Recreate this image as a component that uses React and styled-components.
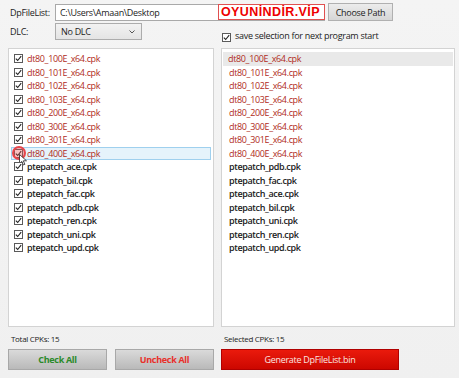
import React from "react";
import styled, { createGlobalStyle } from "styled-components";

const Global = createGlobalStyle`
  html, body { margin: 0; padding: 0; background: #f0f0f0; }
  body { font-family: "Open Sans", "Noto Sans", sans-serif; }
`;

const Window = styled.div`
  width: 459px;
  height: 378px;
  box-sizing: border-box;
  padding: 3px 4px 0 8px;
  background: linear-gradient(#f4f4f4, #f0f0f0);
  display: flex;
  flex-direction: column;
  font-size: 9px;
  letter-spacing: -0.3px;
  color: #1e1e1e;
`;

const TopRow = styled.div`
  display: flex;
  align-items: center;
  height: 18px;
`;

const Label = styled.span`
  width: 45px;
  padding-left: 2px;
  font-size: 9px;
  color: #222;
`;

const PathField = styled.div`
  position: relative;
  width: 270px;
  height: 17px;
  box-sizing: border-box;
  border: 1px solid #a9a9a9;
  background: #fff;
  padding: 0 4px;
  display: flex;
  align-items: center;
  font-size: 9px;
  color: #222;
`;

const Watermark = styled.span`
  position: absolute;
  right: -1px;
  top: -1px;
  width: 107px;
  height: 16px;
  box-sizing: border-box;
  border: 1px solid #e05050;
  background: #fff;
  color: #ee0000;
  font-family: "Liberation Sans", Arial, sans-serif;
  font-weight: 700;
  font-size: 12.5px;
  letter-spacing: 0.4px;
  display: flex;
  align-items: center;
  padding-left: 2px;
`;

const GrayButton = styled.button`
  margin-left: 3px;
  height: 18px;
  width: 65px;
  padding: 0;
  border: 1px solid #b0b0b0;
  background: linear-gradient(#ececec, #d6d6d6);
  font-family: inherit;
  letter-spacing: inherit;
  font-size: 9px;
  color: #222;
`;

const Grid = styled.div`
  display: grid;
  grid-template-columns: 206px 234px;
  column-gap: 7px;
  grid-template-rows: 27px 279px 22px 21px;
`;

const DlcCell = styled.div`
  display: flex;
  align-items: center;
  padding-bottom: 6px;
`;

const Select = styled.div`
  width: 87px;
  height: 17px;
  box-sizing: border-box;
  border: 1px solid #acacac;
  background: linear-gradient(#f2f2f2, #e4e4e4);
  display: flex;
  align-items: center;
  justify-content: space-between;
  padding: 0 6px 0 5px;
  font-size: 9px;
  color: #222;
`;

const SaveCell = styled.div`
  display: flex;
  align-items: flex-end;
  gap: 4px;
  padding: 0 0 6px 1px;
  font-size: 9px;
  color: #222;
`;

const ListBox = styled.div`
  box-sizing: border-box;
  border: 1px solid #d3d3d3;
  background: #fff;
  padding: 3px 2px 0 2px;
  display: flex;
  flex-direction: column;
`;

const Row = styled.div`
  position: relative;
  height: 13.5px;
  box-sizing: border-box;
  display: flex;
  align-items: center;
  gap: 4px;
  padding-left: ${(p) => (p.$plain ? "4px" : "2px")};
  color: ${(p) => (p.$red ? "#b02c22" : "#1a1a1a")};
  font-weight: ${(p) => (p.$red ? 400 : 600)};
  font-size: 9px;
  letter-spacing: -0.36px;
  background: ${(p) => (p.$hover ? "#e5f3fb" : p.$sel ? "#e9e9e9" : "transparent")};
  border: 1px solid ${(p) => (p.$hover ? "#9fd0ee" : "transparent")};
  margin: 0 ${(p) => (p.$sel ? "-1px" : "0")};
`;

const Box = styled.span`
  width: 9px;
  height: 9px;
  box-sizing: border-box;
  border: 1px solid #5a5a5a;
  background: #fff;
  display: inline-flex;
  align-items: center;
  justify-content: center;
  flex: none;
`;

const Ring = styled.span`
  position: absolute;
  left: 0px;
  top: -2px;
  width: 14px;
  height: 14px;
  box-sizing: border-box;
  border-radius: 50%;
  border: 2px solid #e8454a;
  background: rgba(235, 80, 80, 0.35);
`;

const Cursor = styled.svg`
  position: absolute;
  left: 7px;
  top: 6px;
`;

const Count = styled.div`
  display: flex;
  align-items: center;
  padding-left: 3px;
  font-size: 8px;
  color: #222;
`;

const ActionButton = styled.button`
  height: 21px;
  padding: 0;
  margin: 0 ${(p) => (p.$wide ? "56px 0 0" : "0")};
  box-sizing: border-box;
  border: 1px solid ${(p) => (p.$danger ? "#b00000" : "#a8a8a8")};
  background: ${(p) =>
    p.$danger
      ? "linear-gradient(#ea1a0c, #cc0700)"
      : "linear-gradient(#dadada, #b9b9b9)"};
  color: ${(p) => p.$color};
  font-family: inherit;
  letter-spacing: inherit;
  font-weight: ${(p) => (p.$danger ? 400 : 700)};
  font-size: 9px;
`;

const Pair = styled.div`
  display: grid;
  grid-template-columns: 99px 99px;
  column-gap: 8px;
`;

function Check() {
  return (
    <Box>
      <svg width="7" height="7" viewBox="0 0 7 7">
        <path d="M0.8 3.6 L2.7 5.5 L6.2 1.2" fill="none" stroke="#222" strokeWidth="1.1" />
      </svg>
    </Box>
  );
}

const leftItems = [
  "dt80_100E_x64.cpk",
  "dt80_101E_x64.cpk",
  "dt80_102E_x64.cpk",
  "dt80_103E_x64.cpk",
  "dt80_200E_x64.cpk",
  "dt80_300E_x64.cpk",
  "dt80_301E_x64.cpk",
  "dt80_400E_x64.cpk",
  "ptepatch_ace.cpk",
  "ptepatch_bil.cpk",
  "ptepatch_fac.cpk",
  "ptepatch_pdb.cpk",
  "ptepatch_ren.cpk",
  "ptepatch_uni.cpk",
  "ptepatch_upd.cpk",
];

const rightItems = [
  "dt80_100E_x64.cpk",
  "dt80_101E_x64.cpk",
  "dt80_102E_x64.cpk",
  "dt80_103E_x64.cpk",
  "dt80_200E_x64.cpk",
  "dt80_300E_x64.cpk",
  "dt80_301E_x64.cpk",
  "dt80_400E_x64.cpk",
  "ptepatch_pdb.cpk",
  "ptepatch_fac.cpk",
  "ptepatch_ace.cpk",
  "ptepatch_bil.cpk",
  "ptepatch_uni.cpk",
  "ptepatch_ren.cpk",
  "ptepatch_upd.cpk",
];

export default function App() {
  return (
    <>
      <Global />
      <Window>
        <TopRow>
          <Label>DpFileList:</Label>
          <PathField>
            C:\Users\Amaan\Desktop
            <Watermark>OYUNİNDİR.VİP</Watermark>
          </PathField>
          <GrayButton>Choose Path</GrayButton>
        </TopRow>
        <Grid>
          <DlcCell>
            <Label>DLC:</Label>
            <Select>
              <span>No DLC</span>
              <svg width="6" height="4" viewBox="0 0 6 4">
                <path d="M0.5 0.5 L3 3 L5.5 0.5" fill="none" stroke="#555" strokeWidth="1" />
              </svg>
            </Select>
          </DlcCell>
          <SaveCell>
            <Check />
            <span>save selection for next program start</span>
          </SaveCell>
          <ListBox>
            {leftItems.map((t) => {
              const hover = t === "dt80_400E_x64.cpk";
              return (
                <Row key={t} $red={t.startsWith("dt80")} $hover={hover}>
                  <Check />
                  <span>{t}</span>
                  {hover && (
                    <>
                      <Ring />
                      <Cursor width="9" height="12" viewBox="0 0 9 12">
                        <path
                          d="M0.5 0.5 L0.5 9.5 L2.8 7.4 L4.4 11 L5.9 10.3 L4.3 6.8 L7.5 6.8 Z"
                          fill="#fff"
                          stroke="#222"
                          strokeWidth="0.8"
                        />
                      </Cursor>
                    </>
                  )}
                </Row>
              );
            })}
          </ListBox>
          <ListBox>
            {rightItems.map((t, i) => (
              <Row key={t} $plain $red={t.startsWith("dt80")} $sel={i === 0}>
                <span>{t}</span>
              </Row>
            ))}
          </ListBox>
          <Count>Total CPKs: 15</Count>
          <Count>Selected CPKs: 15</Count>
          <Pair>
            <ActionButton $color="#2a8a2a">Check All</ActionButton>
            <ActionButton $color="#e8302a">Uncheck All</ActionButton>
          </Pair>
          <ActionButton $danger $wide $color="#fbe6e0">
            Generate DpFileList.bin
          </ActionButton>
        </Grid>
      </Window>
    </>
  );
}
